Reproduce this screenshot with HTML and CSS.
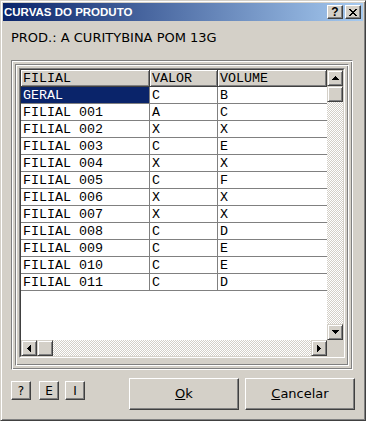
FILE: index.html
```html
<!DOCTYPE html>
<html>
<head>
<meta charset="utf-8">
<title>Curvas do produto</title>
<link rel="stylesheet" href="styles.css">
</head>
<body>
<div class="window">
  <div class="titlebar">
    <span class="title">CURVAS DO PRODUTO</span>
    <div class="tbtns">
      <div class="tbtn help">?</div>
      <div class="tbtn close"><svg width="8" height="7" viewBox="0 0 8 7" shape-rendering="crispEdges"><path d="M0 0h2v1H0zM6 0h2v1H6zM1 1h2v1H1zM5 1h2v1H5zM2 2h4v1H2zM3 3h2v1H3zM2 4h4v1H2zM1 5h2v1H1zM5 5h2v1H5zM0 6h2v1H0zM6 6h2v1H6z"/></svg></div>
    </div>
  </div>
  <div class="prod">PROD.: A CURITYBINA POM 13G</div>
  <div class="frame-outer">
    <div class="frame-inner">
      <div class="grid-outer">
        <div class="grid">
          <div class="cells">
            <div class="hrow">
              <div class="hcell c1">FILIAL</div>
              <div class="hcell c2">VALOR</div>
              <div class="hcell c3">VOLUME</div>
            </div>
            <div class="row"><div class="cell c1 sel">GERAL</div><div class="cell c2">C</div><div class="cell c3">B</div></div>
            <div class="row"><div class="cell c1">FILIAL 001</div><div class="cell c2">A</div><div class="cell c3">C</div></div>
            <div class="row"><div class="cell c1">FILIAL 002</div><div class="cell c2">X</div><div class="cell c3">X</div></div>
            <div class="row"><div class="cell c1">FILIAL 003</div><div class="cell c2">C</div><div class="cell c3">E</div></div>
            <div class="row"><div class="cell c1">FILIAL 004</div><div class="cell c2">X</div><div class="cell c3">X</div></div>
            <div class="row"><div class="cell c1">FILIAL 005</div><div class="cell c2">C</div><div class="cell c3">F</div></div>
            <div class="row"><div class="cell c1">FILIAL 006</div><div class="cell c2">X</div><div class="cell c3">X</div></div>
            <div class="row"><div class="cell c1">FILIAL 007</div><div class="cell c2">X</div><div class="cell c3">X</div></div>
            <div class="row"><div class="cell c1">FILIAL 008</div><div class="cell c2">C</div><div class="cell c3">D</div></div>
            <div class="row"><div class="cell c1">FILIAL 009</div><div class="cell c2">C</div><div class="cell c3">E</div></div>
            <div class="row"><div class="cell c1">FILIAL 010</div><div class="cell c2">C</div><div class="cell c3">E</div></div>
            <div class="row"><div class="cell c1">FILIAL 011</div><div class="cell c2">C</div><div class="cell c3">D</div></div>
          </div>
          <div class="vscroll">
            <div class="sbtn"><svg width="7" height="4" viewBox="0 0 7 4" shape-rendering="crispEdges"><path d="M3 0h1v1h1v1h1v1h1v1H0V3h1V2h1V1h1z"/></svg></div>
            <div class="thumb"></div>
            <div class="track"></div>
            <div class="sbtn"><svg width="7" height="4" viewBox="0 0 7 4" shape-rendering="crispEdges"><path d="M0 0h7v1H6v1H5v1H4v1H3V3H2V2H1V1H0z"/></svg></div>
          </div>
          <div class="hscroll">
            <div class="sbtn"><svg width="4" height="7" viewBox="0 0 4 7" shape-rendering="crispEdges"><path d="M3 0h1v7H3V6H2V5H1V4H0V3h1V2h1V1h1z"/></svg></div>
            <div class="thumb"></div>
            <div class="track"></div>
            <div class="sbtn"><svg width="4" height="7" viewBox="0 0 4 7" shape-rendering="crispEdges"><path d="M0 0h1v1h1v1h1v1h1v1H3v1H2v1H1v1H0z"/></svg></div>
          </div>
          <div class="corner"></div>
        </div>
      </div>
    </div>
  </div>
  <div class="actions">
    <div class="btn small">?</div>
    <div class="btn small b-e">E</div>
    <div class="btn small b-i">I</div>
    <div class="btn big b-ok"><span><u>O</u>k</span></div>
    <div class="btn big b-cancel"><span><u>C</u>ancelar</span></div>
  </div>
</div>
</body>
</html>
```
FILE: styles.css
```css
* { box-sizing: border-box; }
html, body { margin: 0; padding: 0; }
body {
  width: 366px;
  height: 421px;
  overflow: hidden;
  background: #d4d0c8;
  font-family: "DejaVu Sans", sans-serif;
  font-size: 13px;
  color: #000;
}
.window {
  width: 366px;
  height: 421px;
  display: flex;
  flex-direction: column;
  background: #d4d0c8;
  border: 1px solid;
  border-color: #d4d0c8 #404040 #404040 #d4d0c8;
  box-shadow: inset 1px 1px #fff, inset -1px -1px #808080;
  padding: 2px;
}
.titlebar {
  height: 18px;
  flex: none;
  display: flex;
  align-items: center;
  background: linear-gradient(to right, #0a246a, #a6caf0);
  padding-left: 1px;
}
.title {
  color: #fff;
  font-family: "Liberation Sans", sans-serif;
  font-weight: bold;
  font-size: 11.5px;
}
.tbtns {
  margin-left: auto;
  display: flex;
  gap: 2px;
  padding-right: 2px;
}
.tbtn {
  width: 16px;
  height: 14px;
  background: #d4d0c8;
  border: 1px solid;
  border-color: #fff #404040 #404040 #fff;
  box-shadow: inset -1px -1px #808080;
  display: flex;
  align-items: center;
  justify-content: center;
  font-family: "Liberation Sans", sans-serif;
  font-weight: bold;
  font-size: 12px;
  line-height: 12px;
}
.prod {
  margin: 9px 0 0 8px;
  line-height: 16px;
  height: 16px;
}
.frame-outer {
  margin: 14px 0 0 8px;
  width: 342px;
  border: 1px solid;
  border-color: #808080 #fff #fff #808080;
  box-shadow: inset 1px 1px #fff, inset -1px -1px #808080;
  padding: 3px;
}
.frame-inner {
  border: 1px solid;
  border-color: #808080 #fff #fff #808080;
  box-shadow: inset 1px 1px #fff, inset -1px -1px #808080;
  padding: 3px 3px 7px 3px;
}
.grid-outer {
  border: 1px solid;
  border-color: #808080 #fff #fff #808080;
}
.grid {
  border: 1px solid;
  border-color: #404040 #d4d0c8 #d4d0c8 #404040;
  display: grid;
  grid-template-columns: 306px 16px;
  grid-template-rows: 270px 16px;
  background: #d4d0c8;
}
.cells {
  background: #fff;
  overflow: hidden;
  font-family: "Liberation Mono", monospace;
  font-size: 13.33px;
}
.hrow, .row {
  display: flex;
  height: 17px;
}
.c1 { width: 129px; }
.c2 { width: 68px; }
.c3 { width: 109px; }
.hcell {
  height: 17px;
  background: #d4d0c8;
  border-right: 1px solid #404040;
  border-bottom: 1px solid #404040;
  box-shadow: inset 1px 1px #fff, inset -1px -1px #808080;
  padding: 1px 0 0 2px;
  line-height: 15px;
}
.cell {
  height: 17px;
  border-bottom: 1px solid #808080;
  border-right: 1px solid #808080;
  padding: 1px 0 0 2px;
  line-height: 15px;
  white-space: pre;
}
.cell.c3 { border-right: none; }
.cell.sel {
  background: #0a246a;
  color: #fff;
}
.vscroll {
  display: flex;
  flex-direction: column;
}
.hscroll {
  display: flex;
}
.sbtn, .thumb {
  width: 16px;
  height: 16px;
  flex: none;
  background: #d4d0c8;
  border: 1px solid;
  border-color: #d4d0c8 #404040 #404040 #d4d0c8;
  box-shadow: inset 1px 1px #fff, inset -1px -1px #808080;
  display: flex;
  align-items: center;
  justify-content: center;
}
.sbtn svg { display: block; }
.track {
  flex: 1;
  background: repeating-conic-gradient(#fff 0 25%, #d4d0c8 0 50%) 0 0 / 2px 2px;
}
.corner { background: #d4d0c8; }
.actions {
  display: flex;
  align-items: flex-start;
  margin-top: 8px;
  padding-left: 8px;
}
.btn {
  background: #d4d0c8;
  border: 1px solid;
  border-color: #fff #404040 #404040 #fff;
  box-shadow: inset -1px -1px #808080;
  display: flex;
  align-items: center;
  justify-content: center;
  line-height: 16px;
}
.small {
  width: 20px;
  height: 19px;
  margin-top: 3px;
  font-size: 12px;
}
.b-e { margin-left: 8px; }
.b-i { margin-left: 6px; }
.big {
  width: 110px;
  height: 32px;
}
.b-ok { margin-left: 44px; }
.b-cancel { margin-left: 6px; }
```
